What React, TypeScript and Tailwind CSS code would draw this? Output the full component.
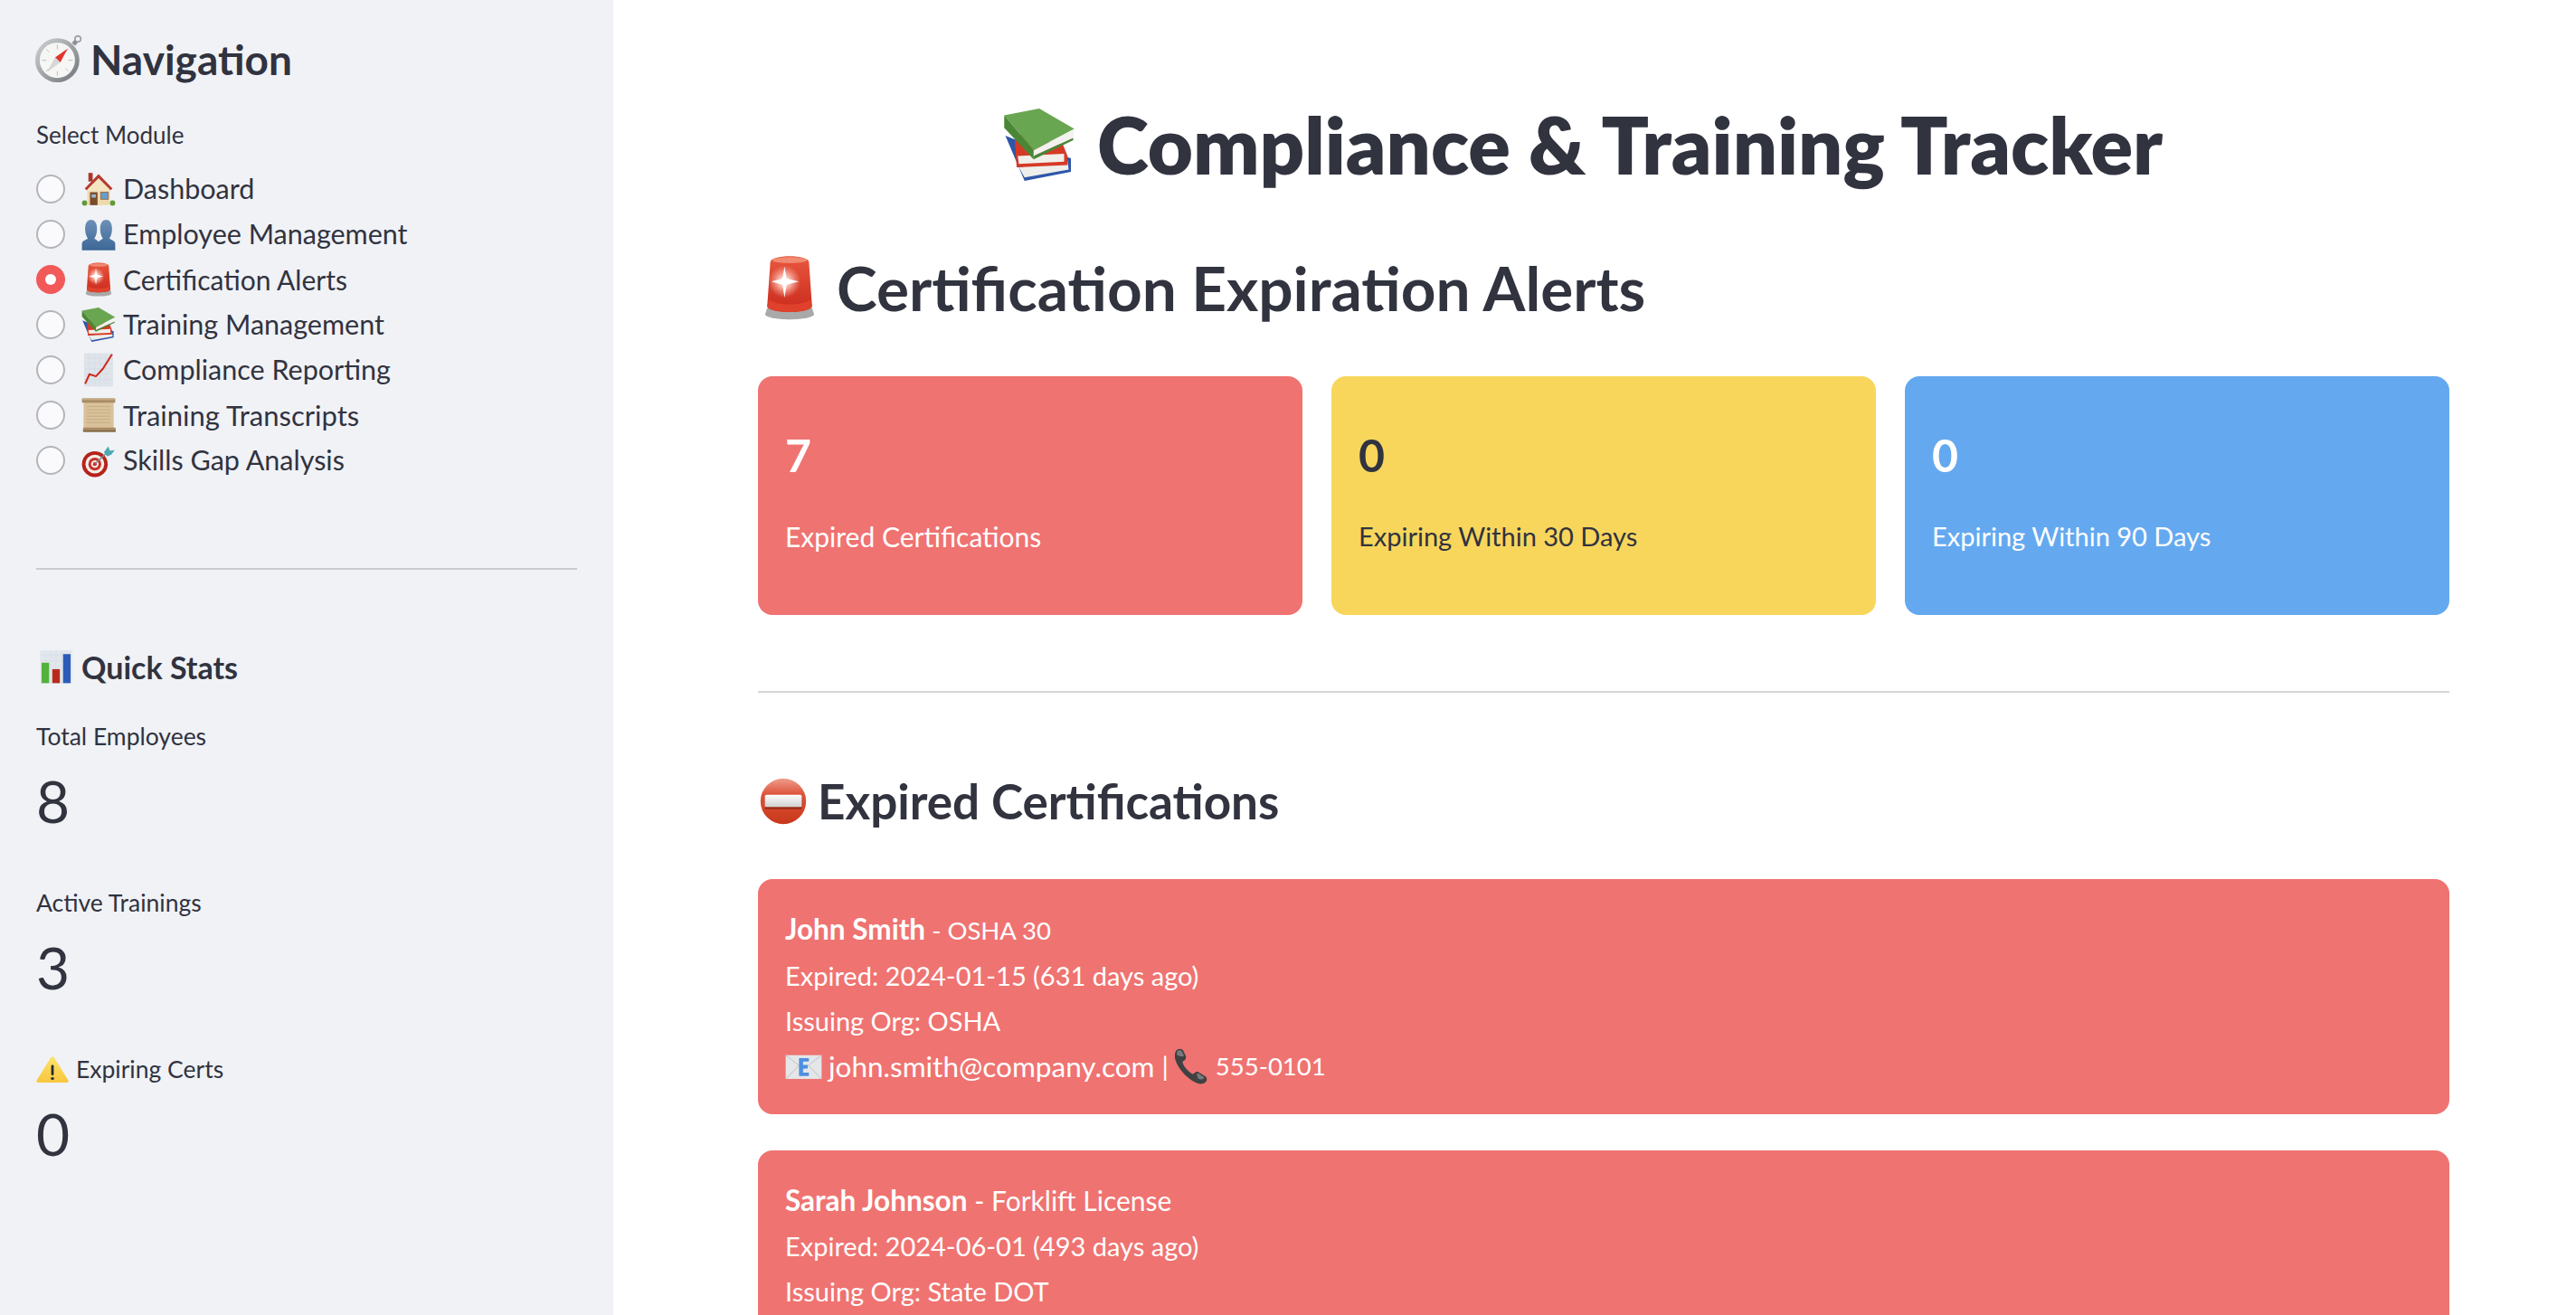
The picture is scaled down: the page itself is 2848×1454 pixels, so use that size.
import React from "react";

type IconProps = { className?: string };

const Compass = ({ className }: IconProps) => (
  <svg viewBox="0 0 64 64" className={className}>
    <defs>
      <linearGradient id="cmpRing" x1="0" y1="0" x2="1" y2="1">
        <stop offset="0" stopColor="#d2d4d7" />
        <stop offset="1" stopColor="#6f7377" />
      </linearGradient>
    </defs>
    <circle cx="58" cy="5" r="4" fill="none" stroke="#9a9ea2" strokeWidth="2" />
    <rect x="51" y="8" width="6" height="5" fill="#8b8f93" transform="rotate(40 54 10)" />
    <circle cx="30" cy="34" r="30" fill="url(#cmpRing)" />
    <circle cx="30" cy="34" r="24" fill="#f6f6f4" />
    <g stroke="#b9bcbf" strokeWidth="1.2">
      <path d="M30 13v6M30 49v6M9 34h6M45 34h6M15 19l4 4M41 45l4 4M45 19l-4 4M19 45l-4 4" />
    </g>
    <path d="M44 18 L34 37 L27 30 Z" fill="#e2352c" />
    <path d="M16 50 L27 30 L34 37 Z" fill="#d5d7d9" />
  </svg>
);

const House = ({ className }: IconProps) => (
  <svg viewBox="0 0 64 64" className={className}>
    <rect x="13" y="2" width="8" height="16" fill="#a8392c" />
    <ellipse cx="6" cy="58" rx="5" ry="5" fill="#5f9a38" />
    <ellipse cx="58" cy="58" rx="5" ry="5" fill="#5f9a38" />
    <rect x="11" y="26" width="42" height="36" fill="#eed9ad" />
    <path d="M32 4 L58 31 L54 34 L32 12 L10 34 L6 31 Z" fill="#b5392d" />
    <path d="M32 12 L12 32 V36 H52 V32 Z" fill="#f4e4c2" />
    <rect x="16" y="38" width="14" height="24" fill="#7a4a2c" />
    <rect x="19" y="42" width="8" height="6" fill="#8fb8d8" />
    <rect x="36" y="38" width="14" height="13" fill="#6b9ccb" stroke="#8a6b45" strokeWidth="1.5" />
  </svg>
);

const People = ({ className }: IconProps) => (
  <svg viewBox="0 0 64 64" className={className}>
    <defs>
      <linearGradient id="pplG" x1="0" y1="0" x2="0" y2="1">
        <stop offset="0" stopColor="#6d90b8" />
        <stop offset="1" stopColor="#3c6797" />
      </linearGradient>
    </defs>
    <path
      d="M1 62 V50 C1 44 8 43 12 40 C9 35 7 30 7 22 C7 10 12 5 18 5 C24 5 29 10 29 22 C29 30 27 35 24 40 C26 42 30 43 32 46 C34 43 38 42 40 40 C37 35 35 30 35 22 C35 10 40 5 46 5 C52 5 57 10 57 22 C57 30 55 35 52 40 C56 43 63 44 63 50 V62 Z"
      fill="url(#pplG)"
    />
  </svg>
);

const Siren = ({ className }: IconProps) => (
  <svg viewBox="0 0 64 64" className={className}>
    <defs>
      <linearGradient id="srnG" x1="0" y1="0" x2="0" y2="1">
        <stop offset="0" stopColor="#e9573f" />
        <stop offset="1" stopColor="#c92a1c" />
      </linearGradient>
      <radialGradient id="srnS">
        <stop offset="0" stopColor="#ffffff" />
        <stop offset="0.3" stopColor="#ffd9d0" stopOpacity="0.9" />
        <stop offset="1" stopColor="#ffb0a0" stopOpacity="0" />
      </radialGradient>
    </defs>
    <path d="M10 52 H54 L56 58 C56 65 8 65 8 58 Z" fill="#a9a9a9" />
    <path d="M13 7 C13 -1 51 -1 51 7 L54 50 C54 58 10 58 10 50 Z" fill="url(#srnG)" />
    <ellipse cx="32" cy="5" rx="17" ry="3" fill="#f08a70" />
    <circle cx="27" cy="26" r="16" fill="url(#srnS)" />
    <path d="M27 11 L29 23 L41 26 L29 29 L27 42 L25 29 L14 26 L25 23 Z" fill="#fff" />
    <path d="M12 44 C20 50 44 50 52 44 L54 50 C54 58 10 58 10 50 Z" fill="#e0412c" />
  </svg>
);

const Books = ({ className }: IconProps) => (
  <svg viewBox="0 0 64 64" className={className}>
    <path d="M2 24 L12 28 L60 44 L60 56 L19 64 Z" fill="#2f56a8" />
    <path d="M14 52 L57 46 L58 54 L19 61 Z" fill="#eeeeea" />
    <path d="M10 22 L53 32 L57 42 L57 50 L12 52 Z" fill="#d63a26" />
    <path d="M13 42 L54 40 L54 47 L14 49 Z" fill="#f0efea" />
    <path d="M1 6 L32 0 L63 18 L27 37 Z" fill="#69a651" />
    <path d="M1 6 L27 37 L27 45 L1 17 Z" fill="#4a8636" />
    <path d="M27 37 L63 18 L62 26 L27 42 Z" fill="#f2f2ee" />
    <path d="M27 42 L62 26 L62 28 L27 45 Z" fill="#4a8636" />
  </svg>
);

const ChartUp = ({ className }: IconProps) => (
  <svg viewBox="0 0 64 64" className={className}>
    <rect x="5" y="1" width="54" height="62" fill="#dfe4ea" />
    <g stroke="#cdd4dc" strokeWidth="0.6">
      <path d="M5 10h54M5 20h54M5 30h54M5 40h54M5 50h54M15 1v62M25 1v62M35 1v62M45 1v62" />
    </g>
    <path d="M7 58 L15 40 L27 44 L40 30 L57 3" fill="none" stroke="#cf2a1e" strokeWidth="3.5" strokeLinejoin="round" />
  </svg>
);

const Scroll = ({ className }: IconProps) => (
  <svg viewBox="0 0 64 64" className={className}>
    <rect x="4" y="6" width="56" height="52" fill="#d9c19a" />
    <g stroke="#b89f78" strokeWidth="1">
      <path d="M10 16h44M10 22h44M10 28h44M10 34h44M10 40h44M10 46h44" />
    </g>
    <rect x="1" y="1" width="62" height="8" rx="2" fill="#a88c65" />
    <rect x="1" y="1" width="62" height="3" rx="1.5" fill="#c3a97f" />
    <rect x="3" y="55" width="61" height="8" rx="2" fill="#a88c65" />
    <rect x="3" y="60" width="61" height="3" rx="1.5" fill="#7f6846" />
  </svg>
);

const Dart = ({ className }: IconProps) => (
  <svg viewBox="0 0 64 64" className={className}>
    <circle cx="25" cy="39" r="24" fill="#b5231c" />
    <circle cx="25" cy="39" r="17.5" fill="#f2ede6" />
    <circle cx="25" cy="39" r="12" fill="#c9302a" />
    <circle cx="25" cy="39" r="7" fill="#f2ede6" />
    <circle cx="25" cy="39" r="3.5" fill="#c9302a" />
    <path d="M26 38 L46 19" stroke="#7d8a92" strokeWidth="2.5" />
    <path d="M42 17 L50 6 L53 14 L62 13 L56 21 L48 25 Z" fill="#4ea9b5" />
  </svg>
);

const Bars = ({ className }: IconProps) => (
  <svg viewBox="0 0 64 64" className={className}>
    <rect x="2" y="1" width="60" height="62" fill="#e2e7ee" />
    <g stroke="#d0d7e0" strokeWidth="0.6">
      <path d="M2 10h60M2 20h60M2 30h60M2 40h60M2 50h60M12 1v62M22 1v62M32 1v62M42 1v62M52 1v62" />
    </g>
    <rect x="5" y="24" width="14" height="38" fill="#53b23a" />
    <rect x="25" y="36" width="14" height="26" fill="#b82b1c" />
    <rect x="45" y="8" width="14" height="54" fill="#2b5cb8" />
  </svg>
);

const Warning = ({ className }: IconProps) => (
  <svg viewBox="0 0 64 64" className={className} preserveAspectRatio="none">
    <defs>
      <linearGradient id="wrnG" x1="0" y1="0" x2="0" y2="1">
        <stop offset="0" stopColor="#fbe36a" />
        <stop offset="1" stopColor="#f8c63e" />
      </linearGradient>
    </defs>
    <path d="M32 3 C34 3 35 4 36 6 L63 55 C64 58 63 60 60 60 H4 C1 60 0 58 1 55 L28 6 C29 4 30 3 32 3 Z" fill="url(#wrnG)" />
    <rect x="29.5" y="21" width="5" height="23" rx="2.5" fill="#2b2b2b" />
    <circle cx="32" cy="51" r="3.2" fill="#2b2b2b" />
  </svg>
);

const NoEntry = ({ className }: IconProps) => (
  <svg viewBox="0 0 64 64" className={className}>
    <defs>
      <linearGradient id="noG" x1="0" y1="0" x2="0" y2="1">
        <stop offset="0" stopColor="#ef9d8d" />
        <stop offset="0.35" stopColor="#dd5238" />
        <stop offset="1" stopColor="#c8371b" />
      </linearGradient>
      <linearGradient id="noB" x1="0" y1="0" x2="0" y2="1">
        <stop offset="0" stopColor="#ffffff" />
        <stop offset="1" stopColor="#cfcfcf" />
      </linearGradient>
    </defs>
    <circle cx="32" cy="32" r="31" fill="url(#noG)" />
    <rect x="7" y="23" width="50" height="17" rx="2" fill="url(#noB)" />
    <rect x="7" y="40" width="50" height="2.5" fill="#8f2a16" />
  </svg>
);

const Email = ({ className }: IconProps) => (
  <svg viewBox="0 0 64 64" className={className}>
    <rect x="1" y="12" width="62" height="41" fill="#e4e6e8" />
    <path d="M1 12 L32 36 L63 12 M1 53 L24 30 M63 53 L40 30" fill="none" stroke="#bcc0c4" strokeWidth="1.5" />
    <path d="M24 17 H41 V23 H31 V29 H39 V35 H31 V42 H41 V48 H24 Z" fill="#4f8fe0" />
  </svg>
);

const Phone = ({ className }: IconProps) => (
  <svg viewBox="0 0 64 64" className={className}>
    <path
      d="M8 3 C12 0 18 1 20 5 L24 14 C25 17 24 20 21 22 L18 24 C20 32 28 42 37 46 L40 43 C43 41 46 41 48 43 L59 50 C62 53 62 57 59 60 C55 64 47 64 40 60 C25 52 12 38 6 22 C4 15 4 7 8 3 Z"
      fill="#3f4143"
    />
    <path d="M9 5 C12 3 16 3 18 7 L21 14 C16 15 11 14 8 11 Z M43 46 C46 44 48 45 50 47 L57 52 C54 56 50 56 46 54 Z" fill="#77797b" />
  </svg>
);

const modules: { name: string; Icon: (p: IconProps) => React.ReactElement; active?: boolean; size: string }[] = [
  { name: "Dashboard", Icon: House, size: "text-[30.5px]" },
  { name: "Employee Management", Icon: People, size: "text-[30.5px]" },
  { name: "Certification Alerts", Icon: Siren, active: true, size: "text-[30px]" },
  { name: "Training Management", Icon: Books, size: "text-[30.5px]" },
  { name: "Compliance Reporting", Icon: ChartUp, size: "text-[30.5px]" },
  { name: "Training Transcripts", Icon: Scroll, size: "text-[31px]" },
  { name: "Skills Gap Analysis", Icon: Dart, size: "text-[30.5px]" },
];

const Stat = ({ label, value, warn }: { label: string; value: string; warn?: boolean }) => (
  <div className="mb-[38px]">
    <div className="h-[40px] flex items-center text-[26.5px]">
      {warn && <Warning className="w-[36px] h-[32px] mr-[8px]" />}
      {label}
    </div>
    <div className="h-[106px] pb-[4px] flex items-center text-[64px]">{value}</div>
  </div>
);

const Card = ({ bg, text, value, label, labelSize }: { bg: string; text: string; value: string; label: string; labelSize: string }) => (
  <div className={`flex-1 h-[264px] rounded-[16px] pl-[30px] pt-[57px] ${bg} ${text}`}>
    <div className="h-[60px] flex items-center text-[50px] font-bold">{value}</div>
    <div className={`h-[50px] mt-[35px] flex items-center ${labelSize}`}>{label}</div>
  </div>
);

const Alert = ({ name, cert, certSize, expired, org, contact }: { name: string; cert: string; certSize: string; expired: string; org: string; contact?: { email: string; phone: string } }) => (
  <div className="shrink-0 h-[260px] mb-[40px] rounded-[16px] bg-[#ef7371] text-white px-[30px] py-[30px] text-[29.5px] leading-[50px]">
    <div>
      <span className="font-bold text-[31.5px]">{name}</span>
      <span className={certSize}> - {cert}</span>
    </div>
    <div className="text-[29px]">Expired: {expired}</div>
    <div className="text-[29px]">Issuing Org: {org}</div>
    {contact && (
      <div className="flex items-center">
        <Email className="w-[41px] h-[41px] mr-[7px]" />
        <span className="text-[31.5px]">{contact.email}</span>
        <span className="ml-[8px] mr-[4px]">|</span>
        <Phone className="w-[40px] h-[40px] mr-[8px]" />
        <span className="text-[27.5px]">{contact.phone}</span>
      </div>
    )}
  </div>
);

export default function App() {
  return (
    <div className="flex h-[1454px] w-[2848px] overflow-hidden bg-white text-[#31333f] font-['Lato',sans-serif]">
      <aside className="w-[678px] shrink-0 bg-[#f0f2f6] px-[40px]">
        <div className="h-[130px] flex items-center text-[46px] font-bold">
          <Compass className="w-[52px] h-[52px] -ml-[1px] mr-[9px]" />
          Navigation
        </div>
        <div className="h-[38px] flex items-center text-[26px]">Select Module</div>
        <div className="mt-[16px]">
          {modules.map(({ name, Icon, active, size }) => (
            <div key={name} className={`h-[50px] flex items-center ${size}`}>
              {active ? (
                <div className="w-[32px] h-[32px] rounded-full bg-[#f15a58] flex items-center justify-center">
                  <div className="w-[12px] h-[12px] rounded-full bg-white" />
                </div>
              ) : (
                <div className="w-[32px] h-[32px] rounded-full bg-[#fafafc] border-2 border-[#b4b5ba]" />
              )}
              <Icon className="w-[38px] h-[38px] ml-[18px] mr-[8px]" />
              {name}
            </div>
          ))}
        </div>
        <div className="mt-[94px] h-[2px] bg-[#c9cace]" />
        <div className="mt-[77px] h-[60px] flex items-center text-[34px] font-bold">
          <Bars className="w-[38px] h-[41px] ml-[3px] mr-[9px]" />
          Quick Stats
        </div>
        <div className="mt-[28px]">
          <Stat label="Total Employees" value="8" />
          <Stat label="Active Trainings" value="3" />
          <Stat label="Expiring Certs" value="0" warn />
        </div>
      </aside>
      <main className="flex-1 min-w-0 pl-[160px] pr-[140px] flex flex-col overflow-hidden">
        <div className="mt-[100px] h-[120px] shrink-0 flex items-center justify-center pr-[46px] text-[86.5px] font-extrabold">
          <Books className="w-[80px] h-[80px] mr-[24px]" />
          Compliance &amp; Training Tracker
        </div>
        <div className="mt-[48px] h-[100px] shrink-0 flex items-center text-[67.5px] font-bold">
          <Siren className="w-[72px] h-[72px] -ml-[1px] mr-[16px]" />
          Certification Expiration Alerts
        </div>
        <div className="mt-[48px] flex gap-[32px] shrink-0">
          <Card bg="bg-[#ef7371]" text="text-white" value="7" label="Expired Certifications" labelSize="text-[30px]" />
          <Card bg="bg-[#f8d65c]" text="text-[#31333f]" value="0" label="Expiring Within 30 Days" labelSize="text-[29px]" />
          <Card bg="bg-[#64a9f0]" text="text-white" value="0" label="Expiring Within 90 Days" labelSize="text-[29px]" />
        </div>
        <div className="mt-[84px] h-[2px] shrink-0 bg-[#d6d6d8]" />
        <div className="mt-[80px] h-[80px] shrink-0 flex items-center text-[53px] font-bold">
          <NoEntry className="w-[52px] h-[52px] ml-[2px] mr-[12px]" />
          Expired Certifications
        </div>
        <div className="mt-[46px]">
          <Alert name="John Smith" cert="OSHA 30" certSize="text-[27.5px]" expired="2024-01-15 (631 days ago)" org="OSHA" contact={{ email: "john.smith@company.com", phone: "555-0101" }} />
          <Alert name="Sarah Johnson" cert="Forklift License" certSize="text-[30px]" expired="2024-06-01 (493 days ago)" org="State DOT" />
        </div>
      </main>
    </div>
  );
}
